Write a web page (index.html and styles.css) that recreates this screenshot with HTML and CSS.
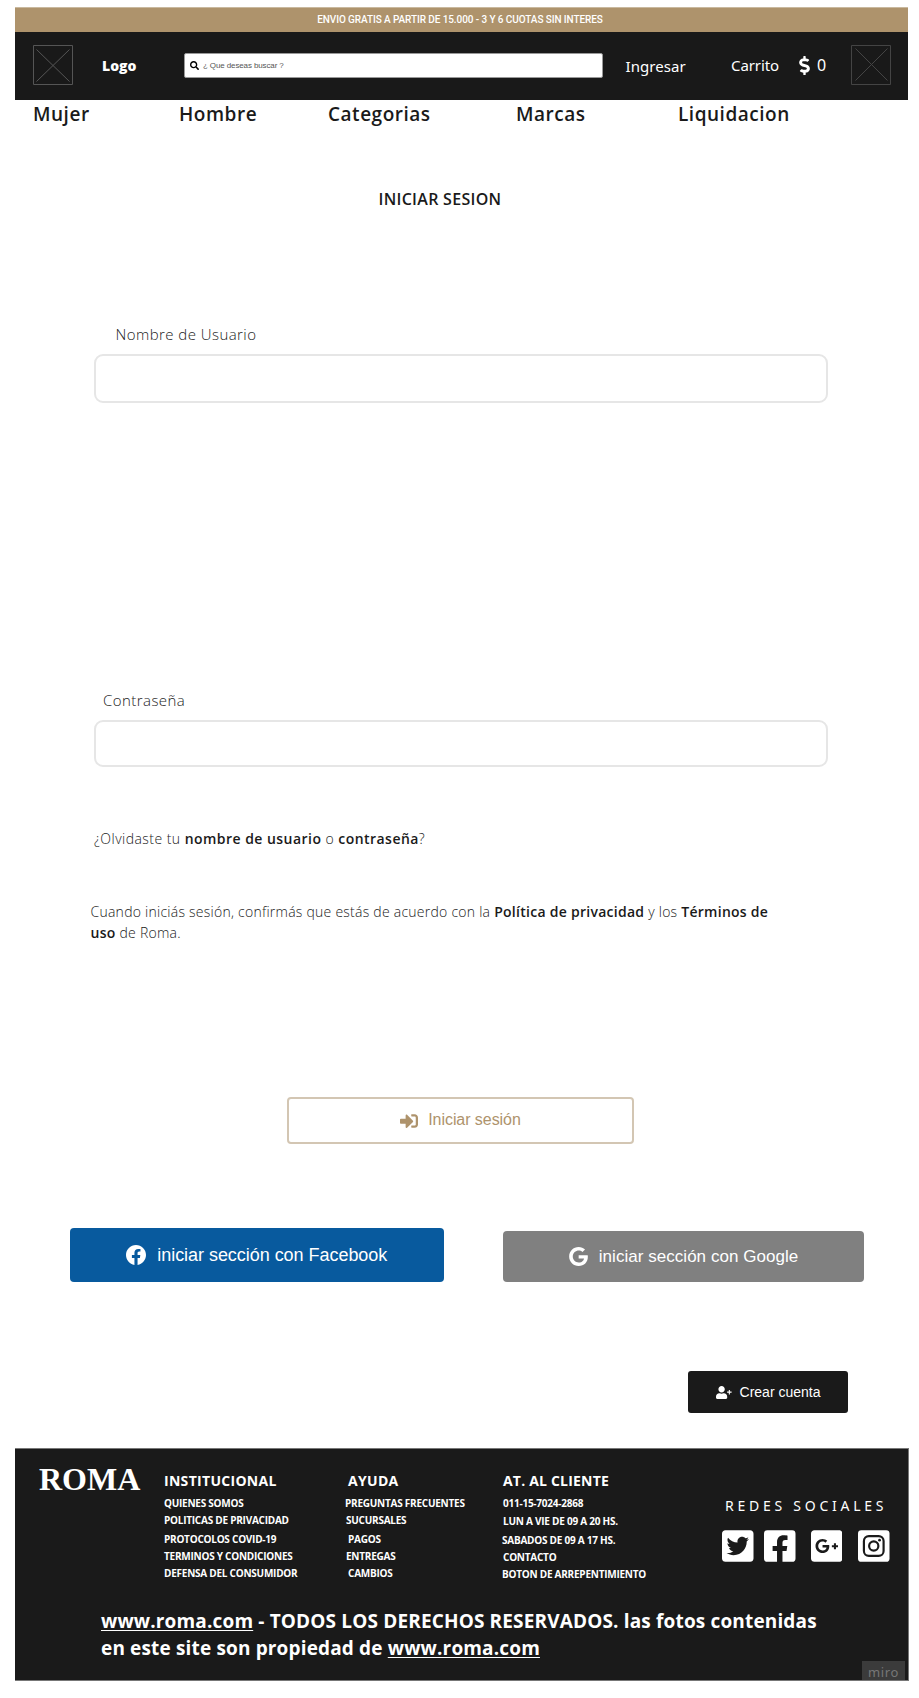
FILE: index.html
```html
<!DOCTYPE html>
<html lang="es">
<head>
<meta charset="utf-8">
<title>Roma - Iniciar sesión</title>
<link rel="stylesheet" href="styles.css">
</head>
<body>
<div class="promo"><span>ENVIO GRATIS A PARTIR DE 15.000 - 3 Y 6 CUOTAS SIN INTERES</span></div>
<header class="header">
  <svg class="placeholder" viewBox="0 0 40 40"><path d="M.5.5h39v39H.5zM3.500 4.500l33 32M36.500 4.500l-33 32"/></svg>
  <strong class="logo">Logo</strong>
  <div class="search">
    <svg viewBox="0 0 512 512"><path d="M505 442.700L405.300 343c-4.500-4.500-10.600-7-17-7H372c27.600-35.300 44-79.700 44-128C416 93.100 322.900 0 208 0S0 93.100 0 208s93.100 208 208 208c48.300 0 92.700-16.400 128-44v16.300c0 6.400 2.500 12.500 7 17l99.700 99.700c9.400 9.400 24.600 9.400 33.900 0l28.300-28.300c9.400-9.400 9.400-24.600.1-34zM208 336c-70.700 0-128-57.200-128-128 0-70.700 57.200-128 128-128 70.700 0 128 57.200 128 128 0 70.700-57.200 128-128 128z"/></svg>
    <span>¿ Que deseas buscar ?</span>
  </div>
  <a class="login">Ingresar</a>
  <a class="cart">Carrito</a>
  <svg class="dollar" viewBox="0 0 288 512"><path d="M209.200 233.400l-108-31.600C88.700 198.200 80 186.500 80 173.500c0-16.300 13.200-29.500 29.500-29.500h66.300c12.200 0 24.200 3.700 34.200 10.500 6.100 4.100 14.300 3.100 19.500-2l34.800-34c7.100-6.900 6.100-18.400-1.800-24.500C238 74.800 207.400 64.100 176 64V16c0-8.800-7.200-16-16-16h-32c-8.800 0-16 7.200-16 16v48h-2.500C45.800 64-5.400 118.700.5 183.600c4.200 46.100 39.400 83.600 83.800 96.600l102.500 30c12.500 3.700 21.200 15.300 21.200 28.300 0 16.300-13.200 29.500-29.500 29.500h-66.300C100 368 88 364.300 78 357.500c-6.100-4.100-14.300-3.100-19.500 2l-34.800 34c-7.100 6.900-6.100 18.400 1.800 24.500 24.500 19.200 55.100 29.900 86.500 30v48c0 8.800 7.200 16 16 16h32c8.800 0 16-7.200 16-16v-48.200c46.600-.9 90.300-28.600 105.700-72.700 21.500-61.600-14.600-124.800-72.500-141.700z"/></svg>
  <span class="total">0</span>
  <svg class="placeholder dim" viewBox="0 0 40 40"><path d="M.5.5h39v39H.5zM4.500 3.500l32 32M36.500 3.500l-32 32"/></svg>
</header>
<nav class="nav"><a>Mujer</a><a>Hombre</a><a>Categorias</a><a>Marcas</a><a>Liquidacion</a></nav>

<main class="main">
  <h1>INICIAR SESION</h1>
  <form>
    <label class="user-label">Nombre de Usuario</label>
    <div class="field user-field"></div>
    <label class="pass-label">Contraseña</label>
    <div class="field pass-field"></div>
    <p class="forgot"><span>¿Olvidaste tu </span><b>nombre de usuario</b> o <b>contraseña</b>?</p>
    <p class="terms">Cuando iniciás sesión, confirmás que estás de acuerdo con la <b>Política de privacidad</b> y los <b>Términos de<br>uso</b> de Roma.</p>
    <a class="btn submit">
      <svg viewBox="0 0 512 512"><path d="M416 448h-84c-6.600 0-12-5.400-12-12v-40c0-6.600 5.400-12 12-12h84c17.700 0 32-14.300 32-32V160c0-17.700-14.300-32-32-32h-84c-6.600 0-12-5.400-12-12V76c0-6.600 5.400-12 12-12h84c53 0 96 43 96 96v192c0 53-43 96-96 96zm-47-201L201 79c-15-15-41-4.500-41 17v96H24c-13.300 0-24 10.700-24 24v96c0 13.300 10.700 24 24 24h136v96c0 21.500 26 32 41 17l168-168c9.300-9.400 9.300-24.600 0-34z"/></svg>
      <span>Iniciar sesión</span>
    </a>
    <div class="social-login">
      <a class="btn facebook">
        <svg viewBox="8 8 496 496"><path d="M504 256C504 119 393 8 256 8S8 119 8 256c0 123.780 90.690 226.380 209.250 245V327.690h-63V256h63v-54.640c0-62.150 37-96.480 93.670-96.480 27.140 0 55.520 4.840 55.520 4.840v61h-31.280c-30.800 0-40.410 19.120-40.410 38.730V256h68.780l-11 71.690h-57.780V501C413.310 482.380 504 379.780 504 256z"/></svg>
        <span>iniciar sección con Facebook</span>
      </a>
      <a class="btn google">
        <svg viewBox="0 8 488 496"><path d="M488 261.800C488 403.300 391.100 504 248 504 110.800 504 0 393.200 0 256S110.800 8 248 8c66.800 0 123 24.500 166.300 64.900l-67.500 64.900C258.500 52.600 94.300 116.600 94.300 256c0 86.500 69.100 156.600 153.700 156.600 98.200 0 135-70.400 140.800-106.900H248v-85.300h236.100c2.300 12.700 3.900 24.900 3.900 41.400z"/></svg>
        <span>iniciar sección con Google</span>
      </a>
    </div>
    <a class="btn create">
      <svg viewBox="0 0 640 512"><path d="M624 220h-68v-68h-44v68h-68v44h68v68h44v-68h68zM224 256c70.700 0 128-57.300 128-128S294.700 0 224 0 96 57.300 96 128s57.300 128 128 128zm89.600 32h-16.700c-22.200 10.200-46.900 16-72.900 16s-50.600-5.800-72.900-16h-16.700C60.200 288 0 348.200 0 422.400V464c0 26.500 21.500 48 48 48h352c26.500 0 48-21.500 48-48v-41.600c0-74.200-60.200-134.400-134.400-134.400z"/></svg>
      <span>Crear cuenta</span>
    </a>
  </form>
</main>

<footer class="footer">
  <div class="columns">
    <strong class="brand">ROMA</strong>
    <section class="institutional">
      <h2>INSTITUCIONAL</h2>
      <ul><li>QUIENES SOMOS</li><li>POLITICAS DE PRIVACIDAD</li><li>PROTOCOLOS COVID-19</li><li>TERMINOS Y CONDICIONES</li><li>DEFENSA DEL CONSUMIDOR</li></ul>
    </section>
    <section class="help">
      <h2>AYUDA</h2>
      <ul><li>PREGUNTAS FRECUENTES</li><li>SUCURSALES</li><li>PAGOS</li><li>ENTREGAS</li><li>CAMBIOS</li></ul>
    </section>
    <section class="service">
      <h2>AT. AL CLIENTE</h2>
      <ul><li>011-15-7024-2868</li><li>LUN A VIE DE 09 A 20 HS.</li><li>SABADOS DE 09 A 17 HS.</li><li>CONTACTO</li><li>BOTON DE ARREPENTIMIENTO</li></ul>
    </section>
    <section class="networks">
      <h3>REDES SOCIALES</h3>
      <div class="icons">
        <svg viewBox="0 32 448 448"><path d="M400 32H48C21.500 32 0 53.500 0 80v352c0 26.500 21.500 48 48 48h352c26.500 0 48-21.500 48-48V80c0-26.500-21.500-48-48-48zm-48.900 158.800c.2 2.800.2 5.700.2 8.500 0 86.700-66 186.600-186.600 186.600-37.200 0-71.700-10.800-100.700-29.400 5.300.6 10.400.8 15.800.8 30.700 0 58.900-10.400 81.400-28-28.800-.6-53-19.500-61.300-45.500 10.100 1.500 19.200 1.500 29.600-1.200-30-6.100-52.500-32.500-52.500-64.400v-.8c8.700 4.900 18.900 7.900 29.600 8.300a65.447 65.447 0 0 1-29.200-54.600c0-12.200 3.200-23.400 8.900-33.100 32.300 39.800 80.800 65.800 135.200 68.600-9.300-44.500 24-80.600 64-80.600 18.900 0 35.900 7.900 47.900 20.700 14.800-2.800 29-8.300 41.600-15.800-4.900 15.200-15.200 28-28.800 36.100 13.200-1.400 26-5.100 37.800-10.200-8.900 13.100-20.100 24.700-32.900 34z"/></svg>
        <svg viewBox="0 32 448 448"><path d="M400 32H48A48 48 0 0 0 0 80v352a48 48 0 0 0 48 48h137.250V327.690h-63V256h63v-54.640c0-62.150 37-96.480 93.670-96.480 27.140 0 55.520 4.840 55.520 4.840v61h-31.270c-30.810 0-40.420 19.120-40.420 38.730V256h68.780l-11 71.690h-57.780V480H400a48 48 0 0 0 48-48V80a48 48 0 0 0-48-48z"/></svg>
        <svg viewBox="0 32 448 448"><path d="M400 32H48C21.500 32 0 53.500 0 80v352c0 26.500 21.500 48 48 48h352c26.500 0 48-21.500 48-48V80c0-26.500-21.500-48-48-48zM164 356c-55.300 0-100-44.700-100-100s44.700-100 100-100c27 0 49.500 9.800 67 26.200l-27.100 26.100c-7.400-7.100-20.300-15.400-39.800-15.400-34.100 0-61.900 28.200-61.900 63.200 0 34.900 27.800 63.200 61.900 63.200 39.600 0 54.400-28.500 56.800-43.100H164v-34.400h94.400c1 5 1.600 10.100 1.600 16.600 0 57.100-38.300 97.600-96 97.600zm220-81.800h-29v29h-29.200v-29h-29V245h29v-29H355v29h29v29.200z"/></svg>
        <svg class="instagram" viewBox="0 0 32 32"><rect width="32" height="32" rx="3.400"/><rect class="line" x="6" y="6" width="20" height="20" rx="5"/><circle class="line" cx="16" cy="16" r="4.700"/><circle class="dot" cx="21.900" cy="10.100" r="1.400"/></svg>
      </div>
    </section>
  </div>
  <p class="rights"><u>www.roma.com</u> - TODOS LOS DERECHOS RESERVADOS. las fotos contenidas<br>en este site son propiedad de <u>www.roma.com</u></p>
  <span class="miro">miro</span>
</footer>
</body>
</html>
```
FILE: styles.css
```css
* { box-sizing: border-box; }
body {
  margin: 0;
  padding: 7px 10px 17px 15px;
  background: #fff;
  color: #1a1a1a;
  font-family: "Open Sans", "Noto Sans", sans-serif;
  white-space: nowrap;
}
h1, h2, h3, p, ul { margin: 0; padding: 0; list-style: none; }
svg { display: block; flex: none; fill: currentColor; }
.promo, .header { width: 893px; }

.promo {
  height: 25px;
  padding-right: 3px;
  border-top: 1px solid #c9b99f;
  background: #ae936c;
  color: #fff;
  font: 500 10px/23px Roboto, sans-serif;
  letter-spacing: -.09px;
  text-align: center;
}
.header {
  display: grid;
  grid-template-columns: 69px 82px 440.500px 106.500px 68px 18px 34px 40px;
  align-items: center;
  height: 68px;
  padding: 0 0 2px 18px;
  background: #191919;
  color: #fff;
}
.placeholder { width: 40px; height: 40px; fill: none; stroke: #555; }
.placeholder.dim { stroke: #444; }
.logo { padding-top: 2px; font-size: 14px; font-weight: 800; line-height: 20px; }
.search {
  display: flex;
  align-items: center;
  gap: 4px;
  width: 419px;
  height: 25px;
  padding-left: 5px;
  border: 1px solid #999;
  border-radius: 2px;
  background: #fff;
  color: #555;
  font: 8px/12px "Liberation Sans", sans-serif;
  letter-spacing: -.12px;
}
.search svg { width: 9px; height: 9px; color: #000; }
.search span { padding-top: 1px; }
.login, .cart { font: 15px/20px "Noto Sans", sans-serif; }
.login { padding: 2px 0 0 1px; letter-spacing: .07px; }
.cart { letter-spacing: -.08px; }
.dollar { width: 11px; height: 19px; }
.total { font: 16px/20px "Noto Sans", sans-serif; }
.nav {
  display: grid;
  grid-template-columns: 146px 149px 188px 162px auto;
  padding: 1px 0 0 18px;
  font-size: 19px;
  font-weight: 600;
  line-height: 27px;
  letter-spacing: .52px;
}

.main { padding-top: 60px; }
.main h1 { padding-left: 363.5px; font-size: 16px; font-weight: 600; line-height: 22px; letter-spacing: .29px; }
.user-label, .pass-label { display: block; font-size: 15px; font-weight: 300; line-height: 20px; letter-spacing: .44px; }
.user-label { margin: 114px 0 10px 100.5px; }
.pass-label { margin: 287px 0 10px 88px; }
.field { width: 734px; margin-left: 79px; border: 2px solid #e6e6e6; border-radius: 9px; }
.user-field { height: 49px; }
.pass-field { height: 47px; }
.forgot, .terms { font-size: 14px; font-weight: 300; line-height: 21px; }
.forgot b, .terms b { font-weight: 600; }
.forgot { margin: 61px 0 0 79px; letter-spacing: .46px; }
.terms { margin: 52px 0 0 75.5px; letter-spacing: .25px; }
.terms b { letter-spacing: .27px; }

.btn { display: flex; align-items: center; justify-content: center; font-family: "Liberation Sans", Arial, sans-serif; }
.submit {
  width: 347px;
  height: 47px;
  margin: 154px 0 0 272px;
  padding-bottom: 2px;
  gap: 10px;
  border: 2px solid #d3c6b3;
  border-radius: 4px;
  color: #ae936c;
  font-size: 16px;
  letter-spacing: -.06px;
}
.submit svg { width: 18px; height: 18px; margin-top: 3px; }
.social-login { display: flex; align-items: flex-end; gap: 59px; margin: 84px 0 0 54.5px; color: #fff; }
.facebook { width: 374.5px; height: 54px; gap: 11px; border-radius: 4px; background: #085a9e; font-size: 18px; letter-spacing: -.04px; }
.facebook svg { width: 20px; height: 20px; }
.google { width: 361px; height: 51px; gap: 11px; border-radius: 4px; background: #808080; font-size: 17px; letter-spacing: .04px; }
.google svg { width: 19px; height: 19px; }
.create { width: 160px; height: 42px; margin: 89px 0 0 673px; gap: 8px; border-radius: 3px; background: #1a1a1a; color: #fff; font-size: 14px; }
.create svg { width: 16px; height: 13px; }

.footer {
  position: relative;
  width: 894px;
  height: 233px;
  margin-top: 35px;
  border: 1px solid #777;
  border-width: 1px 1px 1px 0;
  background: #1a1a1a;
  color: #fff;
}
.columns { display: grid; grid-template-columns: 125px 184px 155px 219px auto; height: 153px; padding: 17px 0 0 24px; }
.brand { margin-top: -5px; font: 700 32px/36px "Liberation Serif", serif; }
.footer h2 { font-size: 14px; font-weight: 700; line-height: 20px; letter-spacing: .3px; padding-top: 5px; }
.footer ul { display: grid; grid-template-rows: 17px 19px 17px 17px 17px; padding-top: 5px; font-size: 10px; font-weight: 700; line-height: 14px; letter-spacing: -.24px; }
.help li:nth-child(1) { margin-left: -3px; }
.help li:nth-child(even) { margin-left: -2px; }
.service h2 { letter-spacing: .2px; }
.service ul { grid-template-rows: 18px 19px 17px 17px 17px; }
.service li:nth-child(odd):not(:first-child) { margin-left: -1px; }
.networks { padding-top: 30px; }
.networks h3 { padding-left: 3px; font: 400 14px/20px "Noto Sans", sans-serif; letter-spacing: 3.75px; }
.icons { display: grid; grid-template-columns: 42px 46.5px 47.5px 32px; padding-top: 14px; }
.icons svg { width: 31.5px; height: 32px; }
.instagram .line { fill: none; stroke: #1a1a1a; stroke-width: 2.2; }
.instagram .dot { fill: #1a1a1a; }
.rights { padding: 6px 0 0 86px; font-size: 19px; font-weight: 700; line-height: 27px; letter-spacing: .155px; }
.rights u { text-decoration-thickness: 1px; text-underline-offset: 2px; }
.miro {
  position: absolute;
  right: 3px;
  bottom: 0;
  width: 43px;
  height: 19px;
  background: #3b3b3b;
  color: #777;
  font: 400 13px/23px "Noto Sans", sans-serif;
  letter-spacing: .6px;
  text-align: center;
  overflow: hidden;
}
```
